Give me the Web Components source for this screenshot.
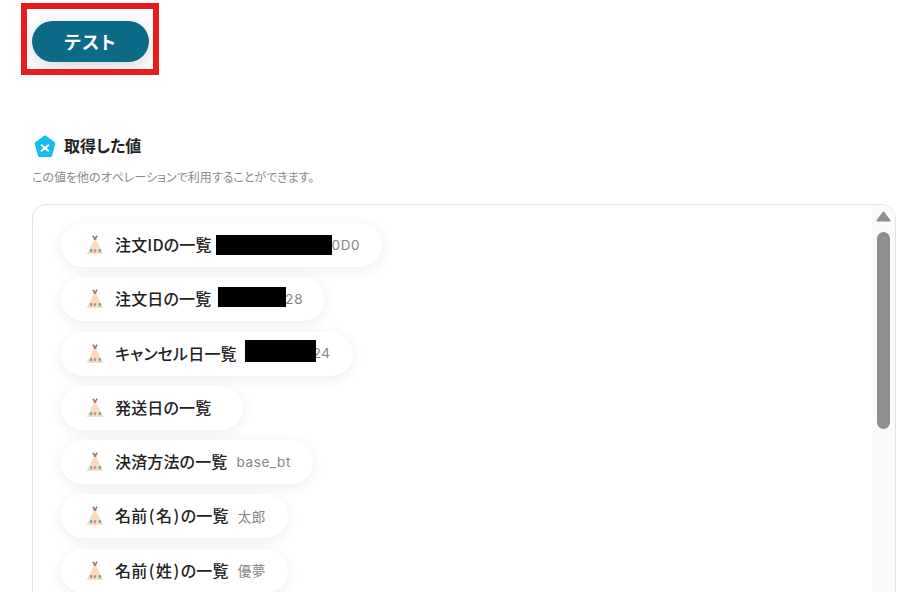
<!DOCTYPE html>
<html lang="ja">
<head>
<meta charset="utf-8">
<title>取得した値</title>
<style>
    html, body { margin: 0; height: 100%; overflow: hidden; background: #fff; }
    body { font-family: "Noto Sans CJK JP", "Noto Sans", sans-serif; font-feature-settings: "palt"; position: relative; }
</style>
</head>
<body>
<test-button>テスト</test-button>
<value-section heading="取得した値" note="この値を他のオペレーションで利用することができます。">
    <value-pill name="注文IDの一覧" redact="116" shift="-5" value="0D0"></value-pill>
    <value-pill name="注文日の一覧" redact="68" shift="-2" tail="-1" lift="2" value="28"></value-pill>
    <value-pill name="キャンセル日一覧" redact="71" shift="-1" tail="-3" lift="2" tall="22" value="24"></value-pill>
    <value-pill name="発送日の一覧"></value-pill>
    <value-pill name="決済方法の一覧" value="base_bt"></value-pill>
    <value-pill name="名前(名)の一覧" value="太郎"></value-pill>
    <value-pill name="名前(姓)の一覧" value="優夢"></value-pill>
</value-section>

<script>
class TestButton extends HTMLElement {
    constructor() {
        super();
        this.attachShadow({ mode: 'open' });
    }

    connectedCallback() {
        this.shadowRoot.innerHTML = `
            <style>
                :host {
                    display: block;
                    padding: 21px 0 0 32px;
                    height: 62px;
                    box-sizing: content-box;
                }
                .btn {
                    display: flex;
                    align-items: center;
                    justify-content: center;
                    box-sizing: border-box;
                    width: 117px;
                    height: 41px;
                    padding-bottom: 2px;
                    border-radius: 21px;
                    background: #0b6a85;
                    color: #fff;
                    font-size: 18px;
                    font-weight: 700;
                    letter-spacing: 1.2px;
                    box-shadow: 0 4px 20px rgba(0,0,0,0.16);
                }
                .mark {
                    position: absolute;
                    left: 21px;
                    top: 3px;
                    width: 138px;
                    height: 72px;
                    box-sizing: border-box;
                    border: 6px solid #e81c1c;
                }
            </style>
            <div class="btn"><slot></slot></div>
            <div class="mark"></div>
        `;
    }
}

class ValueSection extends HTMLElement {
    constructor() {
        super();
        this.attachShadow({ mode: 'open' });
    }

    connectedCallback() {
        this.shadowRoot.innerHTML = `
            <style>
                :host {
                    display: block;
                    padding: 51px 13px 0 32px;
                }
                .head {
                    display: flex;
                    align-items: center;
                    gap: 8px;
                    height: 24px;
                    padding-left: 2px;
                    font-size: 16px;
                    font-weight: 700;
                    line-height: 22px;
                    color: #222;
                }
                .head span {
                    margin-top: -2px;
                }
                .note {
                    margin-top: 11px;
                    height: 16px;
                    line-height: 16px;
                    font-size: 12px;
                    color: #8a8a8a;
                }
                .panel {
                    margin-top: 19px;
                    height: 500px;
                    box-sizing: border-box;
                    border: 1px solid #e3e3e3;
                    border-radius: 14px;
                    display: flex;
                    overflow: hidden;
                }
                .list {
                    flex: 1;
                    display: flex;
                    flex-direction: column;
                    align-items: flex-start;
                    gap: 10.3px;
                    padding: 18px 0 0 28px;
                }
                .track {
                    width: 23px;
                    flex: none;
                    background: #fafafa;
                    display: flex;
                    flex-direction: column;
                    align-items: center;
                    padding-top: 6px;
                }
                .thumb {
                    width: 13px;
                    height: 197px;
                    margin-top: 10px;
                    border-radius: 7px;
                    background: #8f8f8f;
                }
            </style>
            <div class="head">
                <svg width="22" height="23" viewBox="0 0 22 23">
                    <path d="M11 2 L19.8 8.4 L16.6 20.5 L5.4 20.5 L2.2 8.4 Z" fill="#14bdee" stroke="#14bdee" stroke-width="3" stroke-linejoin="round"/>
                    <path d="M7.6 10.2 L14.4 15.8 M14.4 10.2 L7.6 15.8" stroke="#fff" stroke-width="1.9" stroke-linecap="round" fill="none"/>
                </svg>
                <span>${this.getAttribute('heading')}</span>
            </div>
            <div class="note">${this.getAttribute('note')}</div>
            <div class="panel">
                <div class="list"><slot></slot></div>
                <div class="track">
                    <svg width="15" height="11" viewBox="0 0 15 11"><path d="M7.5 1.5 L13.5 9.5 L1.5 9.5 Z" fill="#8f8f8f" stroke="#8f8f8f" stroke-width="2" stroke-linejoin="round"/></svg>
                    <div class="thumb"></div>
                </div>
            </div>
        `;
    }
}

class ValuePill extends HTMLElement {
    constructor() {
        super();
        this.attachShadow({ mode: 'open' });
    }

    connectedCallback() {
        const name = this.getAttribute('name').replace(/([()])/g, '<span class="paren">$1</span>');
        const value = this.getAttribute('value') || '';
        const redact = this.getAttribute('redact');
        const shift = this.getAttribute('shift') || 0;
        const tail = this.getAttribute('tail') || 0;
        const lift = this.getAttribute('lift') || 0;
        const tall = this.getAttribute('tall') || 20;
        const cover = redact
            ? `<span class="cover" style="width:${redact}px;height:${tall}px;margin:0 ${tail}px 0 ${shift}px;transform:translateY(-${lift}px)"></span>`
            : '';

        this.shadowRoot.innerHTML = `
            <style>
                :host {
                    display: flex;
                    align-items: center;
                    height: 44px;
                    box-sizing: border-box;
                    padding: 0 22px 0 25px;
                    border-radius: 22px;
                    background: #fff;
                    box-shadow: 0 3px 14px rgba(0,0,0,0.08);
                    flex: none;
                }
                :host(:not([value])) {
                    padding-right: 23px;
                }
                svg {
                    flex: none;
                    margin-right: 11px;
                }
                .name {
                    font-size: 16px;
                    font-weight: 500;
                    letter-spacing: 0.15px;
                    line-height: 22px;
                    margin-top: -2px;
                    color: #222;
                    white-space: nowrap;
                }
                .paren {
                    margin: 0 1.4px;
                }
                .value {
                    display: flex;
                    align-items: center;
                    margin-left: 9px;
                    margin-top: -1px;
                    font-family: Inter, "Noto Sans CJK JP", sans-serif;
                    font-size: 13.5px;
                    letter-spacing: 0.6px;
                    color: #858585;
                    white-space: nowrap;
                    min-height: 1px;
                }
                .cover {
                    display: block;
                    position: relative;
                    background: #000;
                }
            </style>
            <svg width="18" height="20" viewBox="0 0 18 20">
                <path d="M9 3 L17.5 19 L0.5 19 Z" fill="#fdd9bd"/>
                <path d="M6.8 0.8 L9 3.6 L11.2 0.8" stroke="#8d6a66" stroke-width="1.4" fill="none"/>
                <rect x="7.6" y="2.5" width="2.8" height="2.5" fill="#a5807a"/>
                <rect x="4" y="14" width="2.4" height="3.2" rx="1" fill="#3fc4a8"/>
                <rect x="7.8" y="14" width="2.4" height="3.2" rx="1" fill="#f27f8e"/>
                <rect x="12.6" y="14" width="2.4" height="3.2" rx="1" fill="#3fc4a8"/>
            </svg>
            <span class="name">${name}</span>
            <span class="value">${cover}${value}</span>
        `;
    }
}

customElements.define('test-button', TestButton);
customElements.define('value-section', ValueSection);
customElements.define('value-pill', ValuePill);
</script>
</body>
</html>
